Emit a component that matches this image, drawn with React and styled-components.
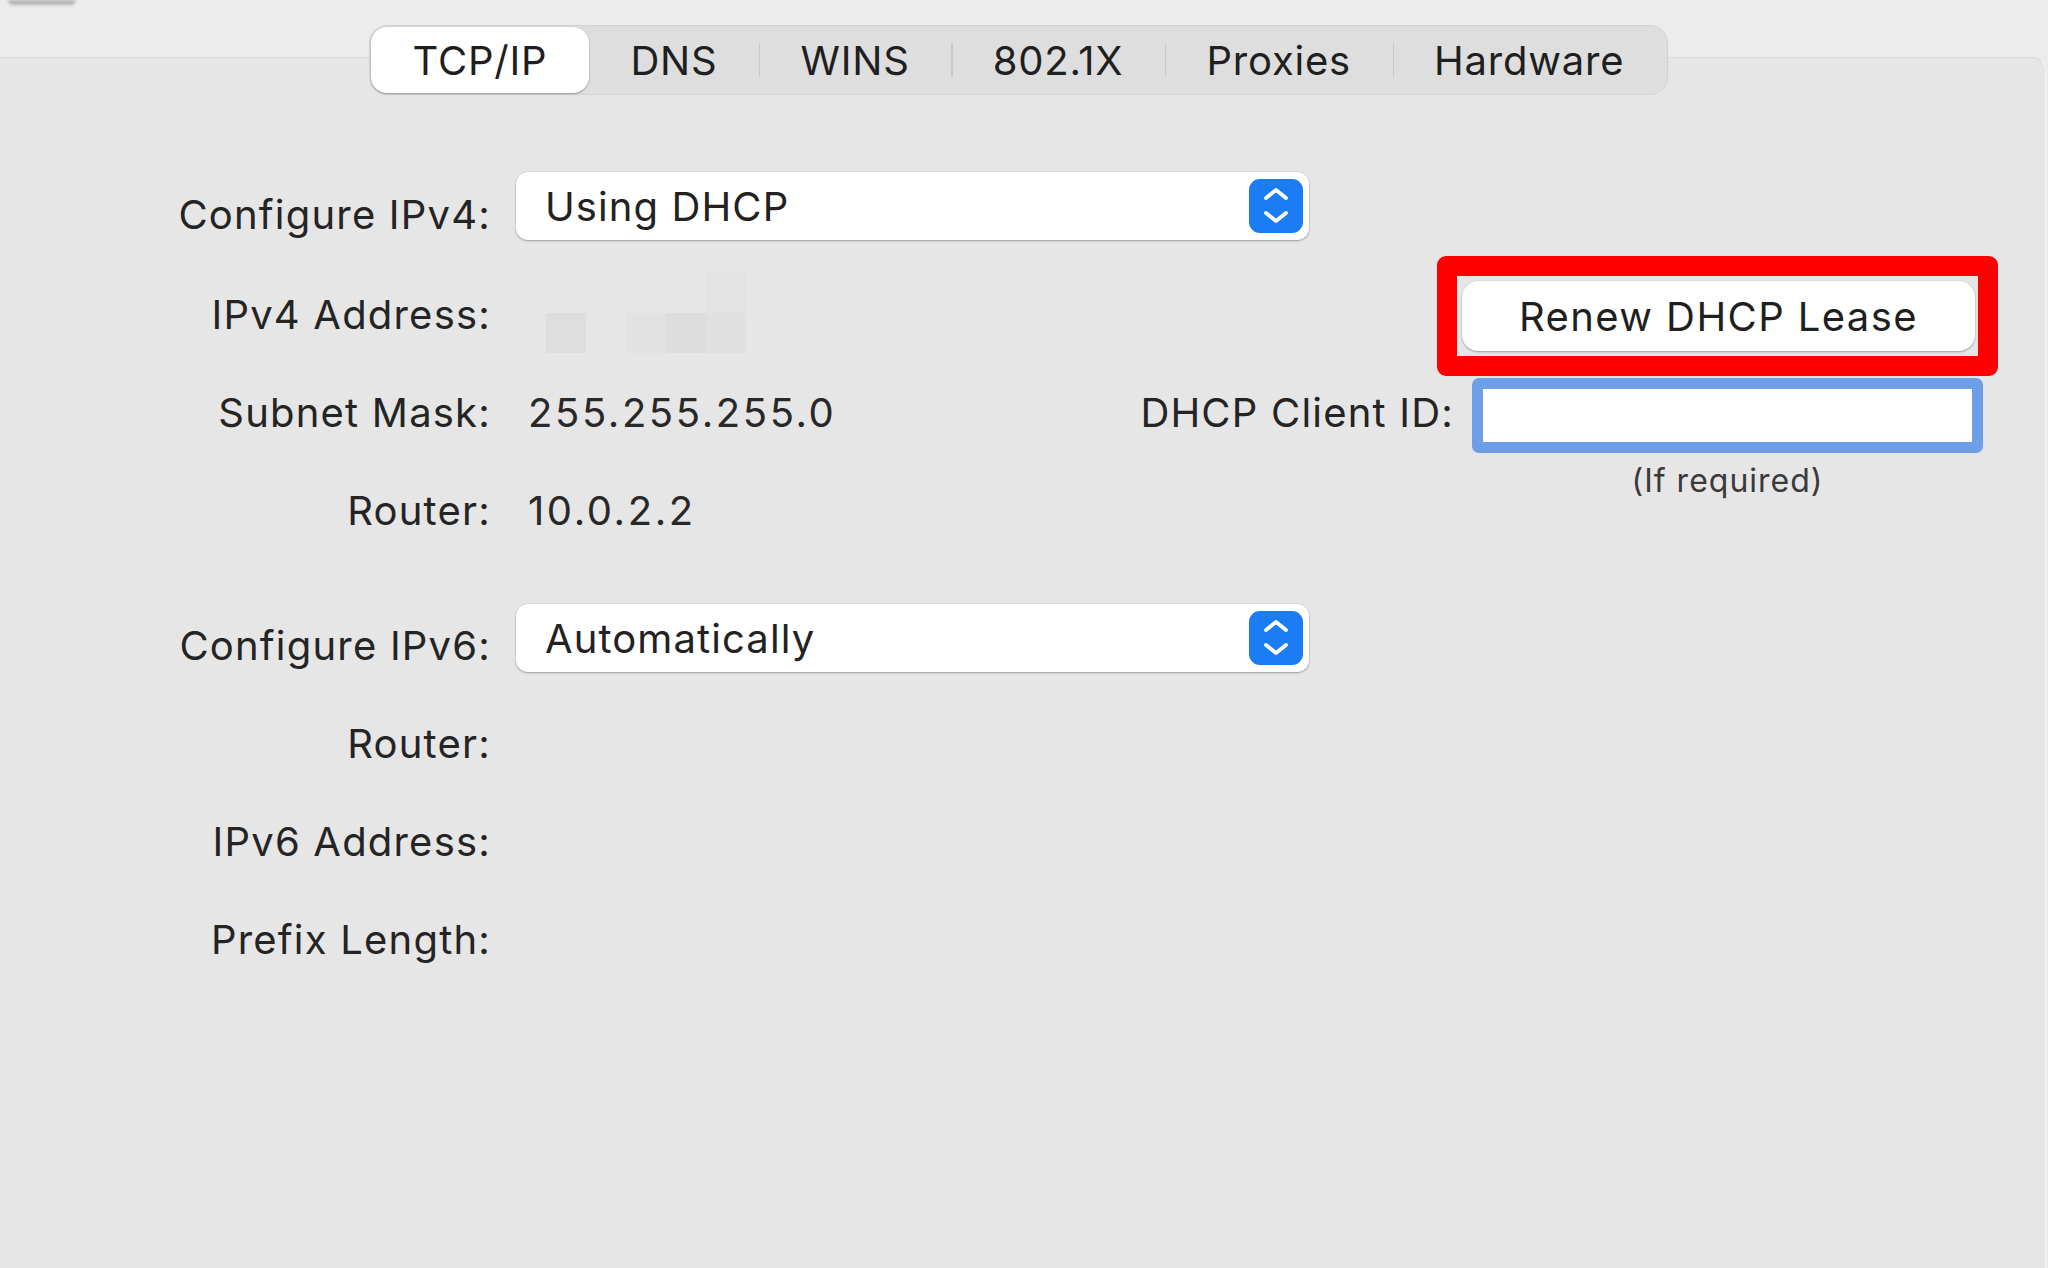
import React from "react";
import styled, { createGlobalStyle } from "styled-components";

const GlobalStyle = createGlobalStyle`
  html, body {
    margin: 0;
    padding: 0;
  }
  body {
    background: #ececec;
    font-family: Inter, "Noto Sans", "Liberation Sans", sans-serif;
    color: #262626;
  }
`;

const Window = styled.div`
  width: 2048px;
  height: 1268px;
  overflow: hidden;
  background: #ececec;
  display: flex;
  flex-direction: column;
`;

// strip above the tab view
const TopStrip = styled.div`
  height: 57px;
  flex-shrink: 0;
  padding-left: 8px;
`;

const Nub = styled.div`
  width: 68px;
  height: 5px;
  background: #b4b4b4;
  border-radius: 0 0 6px 6px;
  filter: blur(1.5px);
`;

const Panel = styled.div`
  flex: 1;
  width: 2045px;
  background: #e6e6e6;
  border-top: 1px solid #dadada;
  border-right: 1px solid #f4f4f4;
  border-top-right-radius: 14px;
`;

// tabs
const TabBar = styled.div`
  display: flex;
  align-items: stretch;
  width: fit-content;
  height: 70px;
  margin: -33px 0 0 369px;
  padding: 1px;
  box-sizing: border-box;
  background: #dedede;
  border: 1px solid #d3d3d3;
  border-radius: 18px;
`;

const Tab = styled.div`
  position: relative;
  display: flex;
  align-items: center;
  padding: 0 41.5px;
  font-size: 40px;
  letter-spacing: 0.8px;
  color: #1f1f1f;
  border-radius: 16px;
  background: ${(p) => (p.$active ? "#ffffff" : "transparent")};
  box-shadow: ${(p) =>
    p.$active ? "0 1px 2px rgba(0,0,0,0.28), 0 0 0 0.5px rgba(0,0,0,0.08)" : "none"};

  &::before {
    content: "";
    display: ${(p) => (p.$sep ? "block" : "none")};
    position: absolute;
    left: 0;
    top: 16px;
    bottom: 16px;
    width: 1.5px;
    background: #c9c9c9;
  }
`;

// form
const Form = styled.div`
  display: grid;
  grid-template-columns: 491px 620px 343px 529px;
  grid-template-rows: 101px repeat(3, 98px) 37px repeat(4, 98px);
  align-items: center;
  margin-top: 69px;
`;

const Label = styled.div`
  grid-column: ${(p) => p.$col || 1};
  grid-row: ${(p) => p.$row};
  text-align: right;
  white-space: nowrap;
  font-size: 40px;
  letter-spacing: 1.2px;
  color: #242424;
`;

const Value = styled.div`
  grid-column: 2;
  grid-row: ${(p) => p.$row};
  margin-left: 37px;
  font-size: 40px;
  letter-spacing: 2.6px;
  color: #282828;
  white-space: nowrap;
`;

const Popup = styled.div`
  grid-column: 2 / 4;
  grid-row: ${(p) => p.$row};
  align-self: start;
  margin: ${(p) => p.$top}px 0 0 25px;
  width: 793px;
  height: 68px;
  box-sizing: border-box;
  display: flex;
  align-items: center;
  justify-content: space-between;
  padding: 0 6px 0 29px;
  background: #ffffff;
  border-radius: 12px;
  box-shadow: 0 1px 2px rgba(0, 0, 0, 0.3), 0 0 0 0.5px rgba(0, 0, 0, 0.08);
  font-size: 40px;
  letter-spacing: 1.1px;
  color: #222;
`;

const Stepper = styled.div`
  width: 54px;
  height: 54px;
  border-radius: 11px;
  background: #1b7cf4;
  display: flex;
  align-items: center;
  justify-content: center;
`;

const Mosaic = styled.div`
  grid-column: 2;
  grid-row: 2;
  align-self: start;
  margin: 8px 0 0 55px;
  display: grid;
  grid-template-columns: repeat(5, 40px);
  grid-template-rows: repeat(2, 40px);
`;

const Block = styled.div`
  background: ${(p) => p.$shade || "transparent"};
`;

// highlighted renew button
const Highlight = styled.div`
  grid-column: 3 / 5;
  grid-row: 2;
  align-self: start;
  justify-self: end;
  margin: -9px -15px 0 0;
  width: 561px;
  box-sizing: border-box;
  border: 20px solid #ff0000;
  border-radius: 9px;
  padding: 5px 3px 5px 5px;
`;

const Button = styled.div`
  height: 70px;
  display: flex;
  align-items: center;
  justify-content: center;
  background: #ffffff;
  border-radius: 16px;
  box-shadow: 0 1px 2px rgba(0, 0, 0, 0.3), 0 0 0 0.5px rgba(0, 0, 0, 0.06);
  font-size: 40px;
  letter-spacing: 1.4px;
  color: #1f1f1f;
`;

const ClientField = styled.div`
  grid-column: 4;
  grid-row: 3;
  align-self: start;
  margin: 15px 0 0 18px;
  height: 75px;
  box-sizing: border-box;
  background: #ffffff;
  border: 11px solid #6d9fe8;
  border-radius: 7px;
`;

const Hint = styled.div`
  grid-column: 4;
  grid-row: 4;
  align-self: start;
  margin-left: 18px;
  text-align: center;
  font-size: 32px;
  letter-spacing: 1px;
  color: #3a3a3a;
`;

const Chevrons = () => (
  <svg width="54" height="54" viewBox="0 0 54 54">
    <path
      d="M17 19 L27 11 L37 19 M17 34 L27 42 L37 34"
      fill="none"
      stroke="#ffffff"
      strokeWidth="3.8"
      strokeLinecap="round"
      strokeLinejoin="round"
    />
  </svg>
);

const tabs = ["TCP/IP", "DNS", "WINS", "802.1X", "Proxies", "Hardware"];

const mosaic = [
  "", "", "", "", "#e3e3e3",
  "#dedede", "", "#e2e2e2", "#dddddd", "#e0e0e0",
];

export default function App() {
  return (
    <Window>
      <GlobalStyle />
      <TopStrip>
        <Nub />
      </TopStrip>
      <Panel>
        <TabBar>
          {tabs.map((t, i) => (
            <Tab key={t} $active={i === 0} $sep={i > 1}>
              {t}
            </Tab>
          ))}
        </TabBar>

        <Form>
          <Label $row={1}>Configure IPv4:</Label>
          <Popup $row={1} $top={8}>
            Using DHCP
            <Stepper>
              <Chevrons />
            </Stepper>
          </Popup>

          <Label $row={2}>IPv4 Address:</Label>
          <Mosaic>
            {mosaic.map((c, i) => (
              <Block key={i} $shade={c} />
            ))}
          </Mosaic>
          <Highlight>
            <Button>Renew DHCP Lease</Button>
          </Highlight>

          <Label $row={3}>Subnet Mask:</Label>
          <Value $row={3}>255.255.255.0</Value>
          <Label $row={3} $col={3}>DHCP Client ID:</Label>
          <ClientField />

          <Label $row={4}>Router:</Label>
          <Value $row={4}>10.0.2.2</Value>
          <Hint>(If required)</Hint>

          <Label $row={6}>Configure IPv6:</Label>
          <Popup $row={6} $top={8}>
            Automatically
            <Stepper>
              <Chevrons />
            </Stepper>
          </Popup>

          <Label $row={7}>Router:</Label>
          <Label $row={8}>IPv6 Address:</Label>
          <Label $row={9}>Prefix Length:</Label>
        </Form>
      </Panel>
    </Window>
  );
}
